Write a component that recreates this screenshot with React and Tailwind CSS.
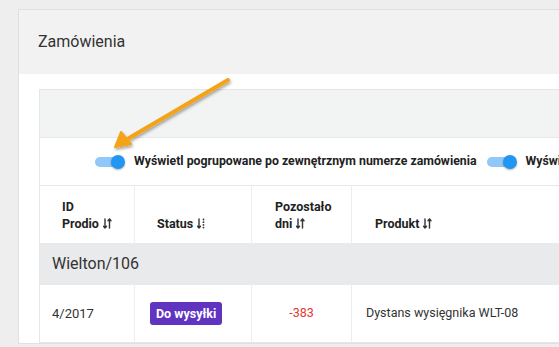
import React from 'react';

function Toggle() {
  return (
    <span className="relative inline-flex h-[14px] w-[30px] shrink-0 items-center">
      <span className="h-[10px] w-[26px] rounded-full bg-[#90c8f8]" />
      <span className="absolute right-0 top-0 h-[14px] w-[14px] rounded-full bg-[#2196f3] shadow-[0_1px_2px_rgba(0,0,0,0.3)]" />
    </span>
  );
}

function Sort({ dotted }) {
  return (
    <svg className="ml-[4px] inline-block align-[-1px]" width="9" height="11" viewBox="0 0 9 11" fill="none" stroke="#333" strokeWidth="1.4" strokeLinecap="round" strokeLinejoin="round">
      <path d="M2 1v9M0.5 8.2L2 10l1.5-1.8" />
      {dotted ? (
        <g fill="#333" stroke="none">
          <circle cx="6.5" cy="1.5" r="0.9" />
          <circle cx="6.5" cy="4.2" r="0.9" />
          <circle cx="6.5" cy="6.9" r="0.9" />
          <circle cx="6.5" cy="9.6" r="0.9" />
        </g>
      ) : (
        <path d="M6.5 10V1M5 2.8L6.5 1 8 2.8" />
      )}
    </svg>
  );
}

export default function App() {
  return (
    <div className="relative h-[347px] w-[559px] overflow-hidden bg-[#eeeeee] pl-[18px] pt-[9px] font-['Roboto',sans-serif]">
      <div className="w-[620px] border border-[#e0e0e0] bg-white">
        <div className="flex h-[64px] items-center bg-[#f2f2f2] px-[19px] text-[16px] text-[#333]">Zamówienia</div>
        <div className="px-[20px] pt-[15px]">
          <div className="w-[620px] border border-[#e6e6e6] bg-[#eaebec]">
            <div className="h-[47px] bg-[#f2f3f3]" />
            <div className="flex h-[49px] items-center gap-[9px] whitespace-nowrap border-y border-[#e8e8e8] bg-white pl-[55px] text-[12.3px] font-bold text-[#222]">
              <Toggle />
              <span className="mr-[1px]">Wyświetl pogrupowane po zewnętrznym numerze zamówienia</span>
              <Toggle />
              <span>Wyświetl</span>
            </div>
            <div className="flex h-[57px] bg-white text-[12.5px] font-bold leading-[17px] text-[#222]">
              <div className="flex w-[95px] items-end border-r border-[#eeeeee] pb-[11px] pl-[22px]">
                <div>ID<br />Prodio<Sort /></div>
              </div>
              <div className="flex w-[117px] items-end border-r border-[#eeeeee] pb-[11px] pl-[22px]">
                <div>Status<Sort dotted /></div>
              </div>
              <div className="flex w-[100px] items-end border-r border-[#eeeeee] pb-[11px] pl-[23px]">
                <div>Pozostało<br />dni<Sort /></div>
              </div>
              <div className="flex flex-1 items-end pb-[11px] pl-[23px]">
                <div>Produkt<Sort /></div>
              </div>
            </div>
            <div className="flex h-[42px] items-center bg-[#e9eaeb] pl-[12px] text-[16px] text-[#333]">Wielton/106</div>
            <div className="flex h-[57px] bg-white text-[12.5px] text-[#333]">
              <div className="flex w-[95px] items-center border-r border-[#eeeeee] pl-[12px] text-[13px]">4/2017</div>
              <div className="flex w-[117px] items-center border-r border-[#eeeeee] pl-[15px]">
                <span className="rounded-[3px] bg-[#6034c0] px-[6px] py-[4px] text-[12.5px] font-bold leading-[15px] text-white">Do wysyłki</span>
              </div>
              <div className="flex w-[100px] items-center justify-center border-r border-[#eeeeee] text-[#e53935]">-383</div>
              <div className="flex flex-1 items-center pl-[14px]">Dystans wysięgnika WLT-08</div>
            </div>
          </div>
        </div>
      </div>
      <svg className="absolute left-0 top-0" width="559" height="347" viewBox="0 0 559 347">
        <defs>
          <filter id="sh" x="-20%" y="-20%" width="140%" height="140%">
            <feDropShadow dx="1" dy="2" stdDeviation="1.5" floodColor="#000" floodOpacity="0.35" />
          </filter>
        </defs>
        <g filter="url(#sh)" stroke="#f5a316" strokeLinecap="round" strokeLinejoin="round" fill="#f5a316">
          <line x1="228" y1="80" x2="124" y2="141" strokeWidth="4" />
          <polygon points="115,147 121,132 131,144" strokeWidth="2" />
        </g>
      </svg>
    </div>
  );
}
